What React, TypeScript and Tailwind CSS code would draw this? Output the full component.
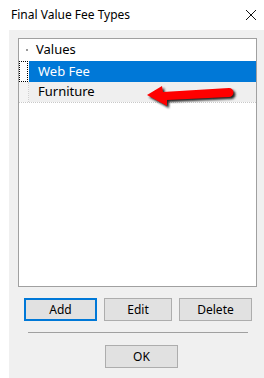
import React from 'react'

const font = { fontFamily: '"Noto Sans", "Open Sans", sans-serif' }

function Btn({ label, w, focus }: { label: string; w: string; focus?: boolean }) {
  return (
    <button
      className={
        'h-[23px] bg-[#e1e1e1] text-[12px] text-black flex items-center justify-center ' +
        w +
        (focus ? ' border-2 border-[#0078d7]' : ' border border-[#adadad]')
      }
    >
      {label}
    </button>
  )
}

export default function App() {
  return (
    <div className="relative w-[264px] h-[378px] bg-white flex flex-col overflow-hidden" style={font}>
      {/* title bar */}
      <div className="h-[30px] flex items-center justify-between pl-[11px] pr-[6px]">
        <span className="text-[12px] text-black">Final Value Fee Types</span>
        <svg width="12" height="12" viewBox="0 0 12 12" className="mr-[1px]">
          <path d="M1 1 L11 11 M11 1 L1 11" stroke="#111" strokeWidth="1" />
        </svg>
      </div>

      <div className="ml-[9px] flex-1 bg-[#f0f0f0] flex flex-col pl-[9px] pt-[8px]">
        {/* grid */}
        <div className="w-[239px] h-[249px] border border-[#a0a0a0] bg-white flex flex-col text-[13px]">
          <div className="h-[22px] flex">
            <div className="w-[10px] flex items-center justify-end pr-[1px]">
              <span className="block w-[2px] h-[2px] bg-[#9a9a9a]" />
            </div>
            <div className="flex-1 flex items-center pl-[7px] text-black">Values</div>
          </div>
          <div className="h-[21px] flex">
            <div className="w-[10px] flex items-stretch">
              <div className="w-[9px] border border-dotted border-black" />
            </div>
            <div className="flex-1 bg-[#0078d7] flex items-center pl-[9px] text-white">Web Fee</div>
          </div>
          <div className="h-[21px] flex border-b border-dotted border-[#c8c8c8]">
            <div className="w-[10px] bg-[#f4f4f4] border-r border-dotted border-[#d0d0d0]" />
            <div className="flex-1 bg-[#efefef] flex items-center pl-[9px] text-black">Furniture</div>
          </div>
        </div>

        <div className="flex mt-[11px] pl-[6px] gap-[7px]">
          <Btn label="Add" w="w-[73px]" focus />
          <Btn label="Edit" w="w-[68px]" />
          <Btn label="Delete" w="w-[73px]" />
        </div>

        <div className="ml-[10px] mt-[11px] w-[220px] h-px bg-[#a0a0a0]" />

        <div className="mt-[12px] pl-[87px]">
          <Btn label="OK" w="w-[73px]" />
        </div>
      </div>

      {/* red callout arrow */}
      <svg className="absolute left-[140px] top-[80px]" width="100" height="32" viewBox="0 0 100 32">
        <defs>
          <filter id="sh" x="-20%" y="-40%" width="140%" height="180%">
            <feGaussianBlur stdDeviation="1.1" />
          </filter>
        </defs>
        <g transform="translate(2,2)" filter="url(#sh)" fill="#222">
          <path d="M7 15 L22 6 L23 12 L89 8 A4.5 4.5 0 0 1 89 17 L27 20 L27 26 Z" />
        </g>
        <path d="M7 15 L22 6 L23 12 L89 8 A4.5 4.5 0 0 1 89 17 L27 20 L27 26 Z" fill="#f00" />
      </svg>
    </div>
  )
}
